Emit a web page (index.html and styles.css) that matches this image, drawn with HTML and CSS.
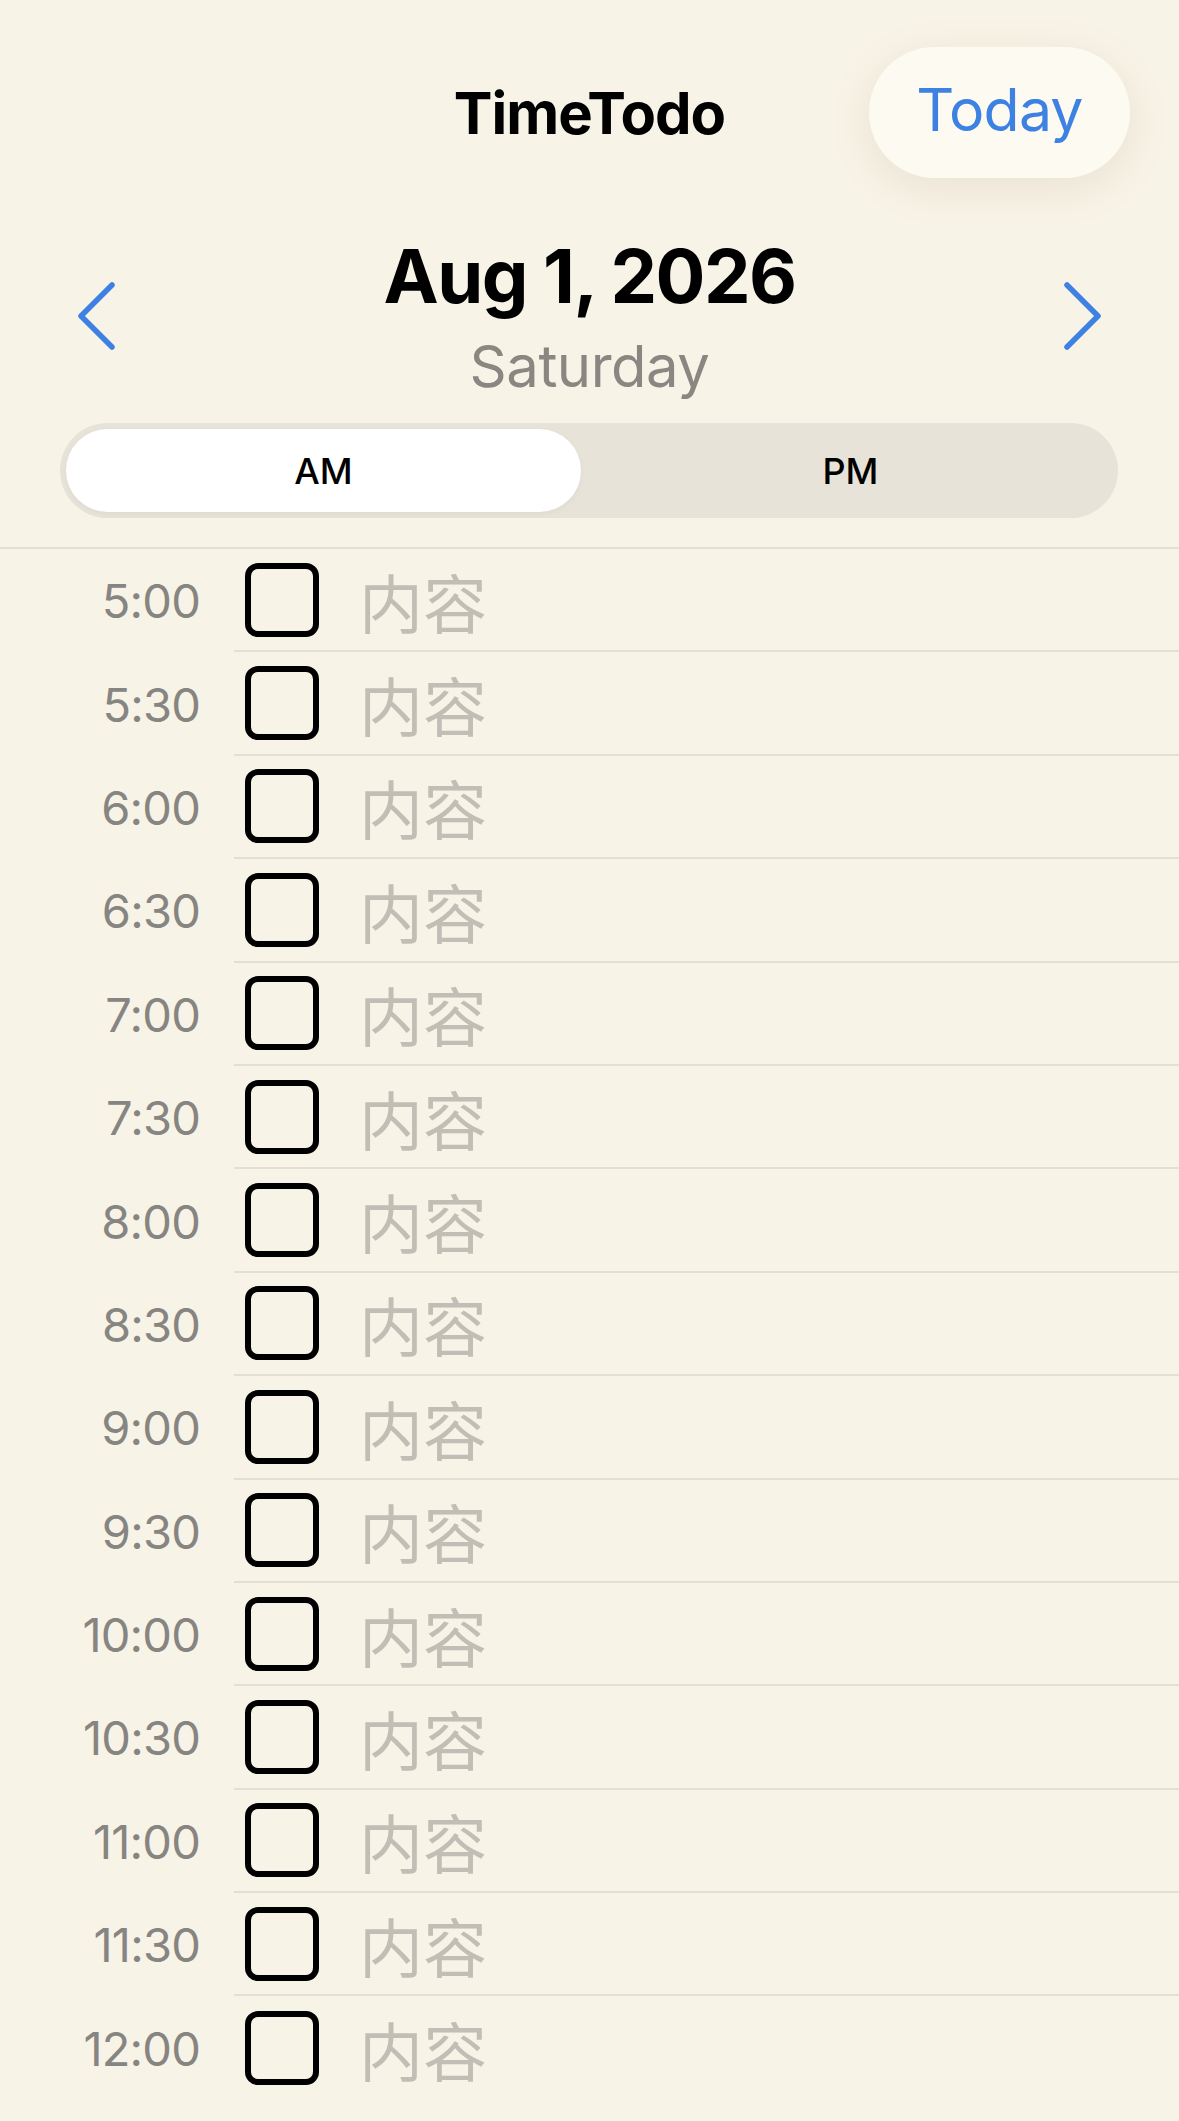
FILE: index.html
```html
<!DOCTYPE html>
<html>
<head>
<meta charset="utf-8">
<link rel="stylesheet" href="styles.css">
</head>
<body>
<div class="app">
  <header class="topbar">
    <div></div>
    <h1 class="title">TimeTodo</h1>
    <button class="today">Today</button>
  </header>
  <section class="datenav">
    <svg class="chev" viewBox="0 0 40 70"><path d="M36 4 L5 35 L36 66" fill="none" stroke="#3d82e3" stroke-width="5.5" stroke-linecap="round" stroke-linejoin="round"/></svg>
    <div class="datebox">
      <div class="date">Aug 1, 2026</div>
      <div class="day">Saturday</div>
    </div>
    <svg class="chev" viewBox="0 0 40 70"><path d="M4 4 L35 35 L4 66" fill="none" stroke="#3d82e3" stroke-width="5.5" stroke-linecap="round" stroke-linejoin="round"/></svg>
  </section>
  <div class="segment">
    <div class="seg active">AM</div>
    <div class="seg">PM</div>
  </div>
  <div class="list">
    <div class="row"><div class="time">5:00</div><div class="content"><span class="box"></span><span class="ph">内容</span></div></div>
    <div class="row"><div class="time">5:30</div><div class="content"><span class="box"></span><span class="ph">内容</span></div></div>
    <div class="row"><div class="time">6:00</div><div class="content"><span class="box"></span><span class="ph">内容</span></div></div>
    <div class="row"><div class="time">6:30</div><div class="content"><span class="box"></span><span class="ph">内容</span></div></div>
    <div class="row"><div class="time">7:00</div><div class="content"><span class="box"></span><span class="ph">内容</span></div></div>
    <div class="row"><div class="time">7:30</div><div class="content"><span class="box"></span><span class="ph">内容</span></div></div>
    <div class="row"><div class="time">8:00</div><div class="content"><span class="box"></span><span class="ph">内容</span></div></div>
    <div class="row"><div class="time">8:30</div><div class="content"><span class="box"></span><span class="ph">内容</span></div></div>
    <div class="row"><div class="time">9:00</div><div class="content"><span class="box"></span><span class="ph">内容</span></div></div>
    <div class="row"><div class="time">9:30</div><div class="content"><span class="box"></span><span class="ph">内容</span></div></div>
    <div class="row"><div class="time">10:00</div><div class="content"><span class="box"></span><span class="ph">内容</span></div></div>
    <div class="row"><div class="time">10:30</div><div class="content"><span class="box"></span><span class="ph">内容</span></div></div>
    <div class="row"><div class="time">11:00</div><div class="content"><span class="box"></span><span class="ph">内容</span></div></div>
    <div class="row"><div class="time">11:30</div><div class="content"><span class="box"></span><span class="ph">内容</span></div></div>
    <div class="row last"><div class="time">12:00</div><div class="content"><span class="box"></span><span class="ph">内容</span></div></div>
  </div>
</div>
</body>
</html>
```
FILE: styles.css
```css
html, body {
  margin: 0;
  padding: 0;
  background: #f8f3e7;
}
body {
  font-family: Inter, "Liberation Sans", "Noto Sans CJK SC", sans-serif;
  color: #000;
  width: 1179px;
  height: 2121px;
  overflow: hidden;
}
.app {
  display: flex;
  flex-direction: column;
}
.topbar {
  display: grid;
  grid-template-columns: 1fr auto 1fr;
  align-items: center;
  padding: 47px 49px 0 49px;
  height: 131px;
}
.title {
  margin: 0;
  font-size: 58px;
  font-weight: 700;
  letter-spacing: -1px;
}
.today {
  justify-self: end;
  width: 261px;
  height: 131px;
  border: none;
  border-radius: 66px;
  background: #fdfbf1;
  box-shadow: 0 10px 40px rgba(150, 130, 90, 0.14);
  color: #3d82e3;
  font-family: Inter, "Liberation Sans", sans-serif;
  font-size: 59px;
  font-weight: 400;
  letter-spacing: -0.8px;
  padding: 0 0 6px 0;
}
.datenav {
  display: grid;
  grid-template-columns: 1fr auto 1fr;
  align-items: center;
  padding: 0 76px 0 76px;
  margin-top: 53px;
}
.chev {
  width: 40px;
  height: 70px;
}
.chev:last-child {
  justify-self: end;
}
.datebox {
  display: flex;
  flex-direction: column;
  align-items: center;
}
.date {
  font-size: 74px;
  font-weight: 700;
  letter-spacing: -1.5px;
  line-height: 90px;
}
.day {
  font-size: 58px;
  color: #8a8782;
  letter-spacing: -0.5px;
  line-height: 70px;
  margin-top: 10px;
}
.segment {
  margin: 22px 61px 0 60px;
  height: 95px;
  background: #e8e3d8;
  border-radius: 48px;
  display: grid;
  grid-template-columns: 1fr 1fr;
  padding: 6px;
  box-sizing: border-box;
}
.seg {
  display: flex;
  align-items: center;
  justify-content: center;
  font-size: 36px;
  font-weight: 500;
  border-radius: 42px;
}
.seg.active {
  background: #ffffff;
  margin-right: 8px;
  box-shadow: 0 2px 6px rgba(0, 0, 0, 0.04);
}
.list {
  margin-top: 29px;
  border-top: 2px solid #e4dfd4;
}
.row {
  display: grid;
  grid-template-columns: 200px 1fr;
  column-gap: 34px;
  height: 103.4px;
}
.time {
  display: flex;
  align-items: center;
  justify-content: flex-end;
  font-size: 47px;
  font-weight: 400;
  color: #878581;
  letter-spacing: -0.8px;
}
.content {
  display: flex;
  align-items: center;
  gap: 40px;
  padding-left: 11px;
  border-bottom: 2px solid #e4dfd4;
}
.row.last .content {
  border-bottom: none;
}
.box {
  width: 74px;
  height: 74px;
  box-sizing: border-box;
  border: 6px solid #000;
  border-radius: 13px;
  flex: none;
}
.ph {
  font-family: "Noto Sans CJK SC", sans-serif;
  font-size: 64px;
  color: #c2beb6;
  line-height: 1;
}
```
